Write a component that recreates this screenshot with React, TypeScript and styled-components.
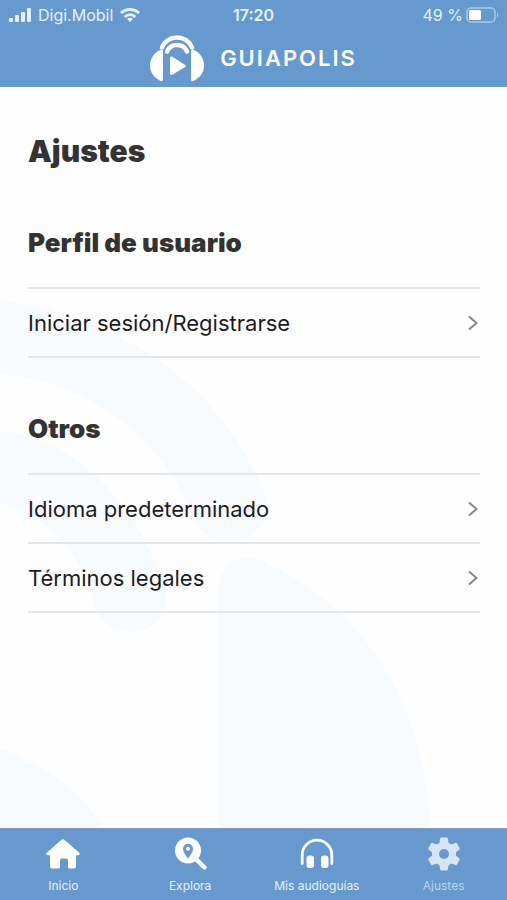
import React from "react";
import styled, { createGlobalStyle } from "styled-components";

const GlobalStyle = createGlobalStyle`
  *, *::before, *::after { box-sizing: border-box; }
  body {
    margin: 0;
    background: #fefefe;
    font-family: Inter, "Liberation Sans", sans-serif;
    color: #1c1c1e;
  }
`;

const Screen = styled.div`
  display: flex;
  flex-direction: column;
  min-height: 100vh;
`;

const Header = styled.header`
  background: #6699cd;
  color: #fff;
`;

const StatusBar = styled.div`
  display: grid;
  grid-template-columns: 1fr auto 1fr;
  align-items: center;
  height: 29px;
  padding: 0 8px;
  font-size: 16px;
  color: #e4f2fd;
`;

const StatusGroup = styled.div<{ $end?: boolean }>`
  display: flex;
  align-items: center;
  gap: ${(p) => (p.$end ? "3px" : "6px")};
  justify-content: ${(p) => (p.$end ? "flex-end" : "flex-start")};
`;

const Clock = styled.time`
  font-weight: 600;
`;

const Brand = styled.div`
  display: flex;
  align-items: center;
  justify-content: center;
  gap: 16px;
  height: 58px;
`;

const BrandName = styled.span`
  font-size: 22px;
  font-weight: 600;
  letter-spacing: 2px;
`;

const Main = styled.main`
  position: relative;
  flex: 1;
  padding: 43px 27px 32px 28px;
`;

const Watermark = styled.svg`
  position: absolute;
  left: 0;
  bottom: 0;
  width: 100%;
  z-index: -1;
`;

const Title = styled.h1`
  margin: 0;
  font-size: 30px;
  line-height: 42px;
  font-weight: 900;
  color: #333;
`;

const Section = styled.section`
  padding-top: 55px;
`;

const SectionTitle = styled.h2`
  margin: 0 0 28px;
  font-size: 26px;
  line-height: 32px;
  font-weight: 900;
  color: #333;
`;

const List = styled.ul`
  margin: 0;
  padding: 0;
  list-style: none;
  border-top: 2px solid #e3e5e7;
`;

const Item = styled.li`
  border-bottom: 2px solid #e3e5e7;
`;

const ItemLink = styled.a`
  display: flex;
  align-items: center;
  justify-content: space-between;
  height: 67px;
  padding-right: 1px;
  font-size: 22px;
  color: inherit;
  text-decoration: none;
`;

const TabBar = styled.nav`
  display: grid;
  grid-template-columns: repeat(4, 1fr);
  height: 72px;
  background: #6699cd;
  border-top: 1px solid #7c9fc4;
`;

const Tab = styled.a<{ $active?: boolean }>`
  display: flex;
  flex-direction: column;
  align-items: center;
  gap: 6px;
  padding-top: 7px;
  font-size: 12px;
  line-height: 16px;
  white-space: nowrap;
  text-decoration: none;
  color: ${(p) => (p.$active ? "#b9d5f1" : "#e6f2fc")};

  svg {
    color: ${(p) => (p.$active ? "#d6e5f6" : "#fff")};
  }
`;

const Signal = () => (
  <svg width="24" height="16" viewBox="0 0 24 16" fill="currentColor" role="img" aria-label="Cobertura">
    <rect x="1" y="11" width="4" height="4" rx="1" />
    <rect x="7" y="8" width="4" height="7" rx="1" />
    <rect x="13" y="5" width="4" height="10" rx="1" />
    <rect x="19" y="1" width="4" height="14" rx="1" />
  </svg>
);

const Wifi = () => (
  <svg width="22" height="16" viewBox="0 0 22 16" fill="none" stroke="currentColor" strokeWidth="3" role="img" aria-label="Wi-Fi">
    <path d="M2 6.2c5.2-5 12.800-5 18 0" />
    <path d="M5.600 10c3.200-3 7.600-3 10.800 0" />
    <path d="M11 15l-3-3.200c1.800-1.500 4.200-1.500 6 0z" fill="currentColor" stroke="none" />
  </svg>
);

const Battery = () => (
  <svg width="33" height="16" viewBox="0 0 33 16" fill="none" role="img" aria-label="Batería">
    <rect x="1" y="1" width="28" height="14" rx="4" stroke="#a9cbea" strokeWidth="1.500" />
    <rect x="3" y="3" width="12" height="10" rx="1.500" fill="#fff" />
    <path d="M31 5.500c1.600.6 1.600 4.400 0 5z" fill="#a9cbea" />
  </svg>
);

const Logo = () => (
  <svg width="54" height="48" viewBox="0 0 54 48" fill="none" aria-hidden="true">
    <path d="M12 13.500a16.200 16.200 0 0 1 30 0" stroke="#fff" strokeWidth="4.500" strokeLinecap="round" />
    <path d="M17 17.500a11 11 0 0 1 20 0" stroke="#fff" strokeWidth="4.500" strokeLinecap="round" />
    <path d="M13 18v27.500c0 1.500-1 2-2.500 1.500C4 43.500 0 38.500 0 31.500 0 24 4.500 18.500 10 16c2-.8 3 0 3 2z" fill="#fff" />
    <path d="M41 18v27.500c0 1.500 1 2 2.500 1.500C50 43.500 54 38.500 54 31.500 54 24 49.500 18.500 44 16c-2-.8-3 0-3 2z" fill="#fff" />
    <path d="M21.500 24v15.500L34 32z" fill="#fff" stroke="#fff" strokeWidth="3" strokeLinejoin="round" />
  </svg>
);

const Chevron = () => (
  <svg width="12" height="18" viewBox="0 0 12 18" fill="none" stroke="#85878a" strokeWidth="2" aria-hidden="true">
    <path d="M2 2.500l7.500 6.500L2 15.500" />
  </svg>
);

const HomeIcon = () => (
  <svg width="36" height="36" viewBox="0 0 36 36" fill="currentColor" aria-hidden="true">
    <path d="M16.300 4a2.500 2.500 0 0 1 3.400 0L34 16.500c1.400 1.200.8 2.700-1 2.700H31v11.300a2 2 0 0 1-2 2h-4.500a1.500 1.500 0 0 1-1.500-1.500v-6.500a2 2 0 0 0-2-2h-4a2 2 0 0 0-2 2V31a1.500 1.500 0 0 1-1.500 1.500H7a2 2 0 0 1-2-2V19.200H3c-1.800 0-2.400-1.500-1-2.700z" />
  </svg>
);

const ExploreIcon = () => (
  <svg width="36" height="36" viewBox="0 0 36 36" aria-hidden="true">
    <circle cx="16" cy="14.500" r="13" fill="currentColor" />
    <path d="M25 24l7.500 7.500" stroke="currentColor" strokeWidth="4.500" strokeLinecap="round" />
    <path d="M16 22.500c-2.500-3.500-5-6.500-5-9.800a5 5 0 0 1 10 0c0 3.300-2.500 6.300-5 9.800z" fill="#6699cd" />
    <circle cx="16" cy="12.700" r="2" fill="currentColor" />
  </svg>
);

const HeadphonesIcon = () => (
  <svg width="36" height="36" viewBox="0 0 36 36" fill="none" aria-hidden="true">
    <path d="M3.200 27.500V19a14.800 14.800 0 0 1 29.600 0v8.500" stroke="currentColor" strokeWidth="2.800" strokeLinecap="round" />
    <rect x="7.500" y="19.500" width="7.500" height="12.500" rx="3" fill="currentColor" />
    <rect x="22" y="19.500" width="7.500" height="12.500" rx="3" fill="currentColor" />
  </svg>
);

const GearIcon = () => (
  <svg width="36" height="36" viewBox="0 0 36 36" aria-hidden="true">
    <g fill="currentColor">
      <circle cx="18" cy="18" r="12" />
      {[0, 60, 120].map((angle) => (
        <path
          key={angle}
          transform={`rotate(${angle} 18 18)`}
          d="M15.500 1.500h5q1.200 0 1.400 1.200L23 10v16l-1.100 7.300q-.2 1.200-1.400 1.200h-5q-1.200 0-1.400-1.200L13 26V10l1.100-7.300q.2-1.200 1.400-1.200z"
        />
      ))}
    </g>
    <circle cx="18" cy="18" r="5" fill="#6699cd" />
  </svg>
);

const sections = [
  { title: "Perfil de usuario", items: ["Iniciar sesión/Registrarse"] },
  { title: "Otros", items: ["Idioma predeterminado", "Términos legales"] },
];

const tabs = [
  { label: "Inicio", Icon: HomeIcon },
  { label: "Explora", Icon: ExploreIcon },
  { label: "Mis audioguías", Icon: HeadphonesIcon },
  { label: "Ajustes", Icon: GearIcon, active: true },
];

export default function App() {
  return (
    <Screen>
      <GlobalStyle />
      <Header>
        <StatusBar>
          <StatusGroup>
            <Signal />
            <span>Digi.Mobil</span>
            <Wifi />
          </StatusGroup>
          <Clock>17:20</Clock>
          <StatusGroup $end>
            <span>49 %</span>
            <Battery />
          </StatusGroup>
        </StatusBar>
        <Brand>
          <Logo />
          <BrandName>GUIAPOLIS</BrandName>
        </Brand>
      </Header>
      <Main>
        <Watermark viewBox="0 0 507 530" fill="#f7fbfe" aria-hidden="true">
          <path d="M0 2C115 18 225 85 266 200c10 42-52 62-72 22C166 145 95 84 0 76z" />
          <path d="M0 133c80 8 142 78 167 165 5 38-58 52-72 10C79 252 50 218 0 206z" />
          <path d="M218 530V298c0-32 20-46 44-35 105 47 163 145 168 267z" />
          <path d="M0 450c48 19 86 47 103 80H0z" />
        </Watermark>
        <Title>Ajustes</Title>
        {sections.map(({ title, items }) => (
          <Section key={title}>
            <SectionTitle>{title}</SectionTitle>
            <List>
              {items.map((item) => (
                <Item key={item}>
                  <ItemLink href="#">
                    {item}
                    <Chevron />
                  </ItemLink>
                </Item>
              ))}
            </List>
          </Section>
        ))}
      </Main>
      <TabBar>
        {tabs.map(({ label, Icon, active }) => (
          <Tab key={label} href="#" $active={active} aria-current={active ? "page" : undefined}>
            <Icon />
            {label}
          </Tab>
        ))}
      </TabBar>
    </Screen>
  );
}
